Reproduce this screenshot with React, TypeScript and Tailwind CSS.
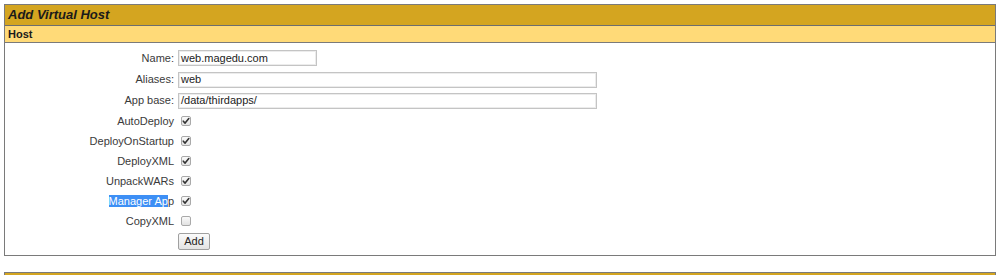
import React from "react";

const font = { fontFamily: '"Liberation Sans", Arial, sans-serif' };

function Check({ checked }: { checked: boolean }) {
  return (
    <span className="ml-[3px] inline-flex h-[10px] w-[10px] items-center justify-center rounded-[2px] border border-[#a9a9a9] bg-gradient-to-b from-[#fafafa] to-[#e2e2e2]">
      {checked && (
        <svg width="8" height="8" viewBox="0 0 8 8">
          <path d="M1.3 4.2 L3.1 6.1 L6.8 1.6" fill="none" stroke="#333" strokeWidth="1.6" strokeLinecap="round" strokeLinejoin="round" />
        </svg>
      )}
    </span>
  );
}

function Row({ label, h, children }: { label: React.ReactNode; h: string; children: React.ReactNode }) {
  return (
    <div className={`flex items-center ${h}`}>
      <div className="w-[169px] text-right text-[11px] text-[#3a3a3a]">{label}</div>
      <div className="ml-[4px] flex items-center">{children}</div>
    </div>
  );
}

function TextInput({ value, w }: { value: string; w: string }) {
  return (
    <div className={`flex h-[16px] ${w} items-center border border-[#c4c4c4] bg-white pl-[2px] text-[11px] text-[#222] shadow-[inset_0_0_0_1px_#ececec]`}>
      {value}
    </div>
  );
}

export default function App() {
  const checks: [React.ReactNode, boolean][] = [
    ["AutoDeploy", true],
    ["DeployOnStartup", true],
    ["DeployXML", true],
    ["UnpackWARs", true],
    [
      <span key="m">
        <span className="bg-[#3d8ff5] text-white">Manager Ap</span>p
      </span>,
      true,
    ],
    ["CopyXML", false],
  ];
  return (
    <div className="h-[275px] w-[1000px] overflow-hidden bg-white pt-[4px]" style={font}>
      <div className="mx-[4px] border border-[#7a7a7a]">
        <div className="flex h-[21px] items-center border-b border-[#6e6e6e] bg-[#d4a520] pl-[3px] text-[13px] font-bold italic text-[#1a1a1a]">
          Add Virtual Host
        </div>
        <div className="flex h-[17px] items-center border-b border-[#7a7a7a] bg-[#ffda78] pl-[3px] text-[11px] font-bold text-[#1a1a1a]">
          Host
        </div>
        <div className="pb-[4px] pt-[4px]">
          <Row label="Name:" h="h-[22px]">
            <TextInput value="web.magedu.com" w="w-[139px]" />
          </Row>
          <Row label="Aliases:" h="h-[21px]">
            <TextInput value="web" w="w-[419px]" />
          </Row>
          <Row label="App base:" h="h-[21px]">
            <TextInput value="/data/thirdapps/" w="w-[419px]" />
          </Row>
          {checks.map(([l, c], i) => (
            <Row key={i} label={l} h="h-[20px]">
              <Check checked={c} />
            </Row>
          ))}
          <Row label="" h="h-[20px]">
            <div className="flex h-[17px] w-[32px] items-center justify-center rounded-[2px] border border-[#a0a0a0] bg-gradient-to-b from-[#fbfbfb] to-[#e3e3e3] text-[11px] text-[#222]">
              Add
            </div>
          </Row>
        </div>
      </div>
      <div className="mx-[4px] mt-[16px] border border-[#7a7a7a]">
        <div className="h-[20px] bg-[#d4a520]" />
      </div>
    </div>
  );
}
